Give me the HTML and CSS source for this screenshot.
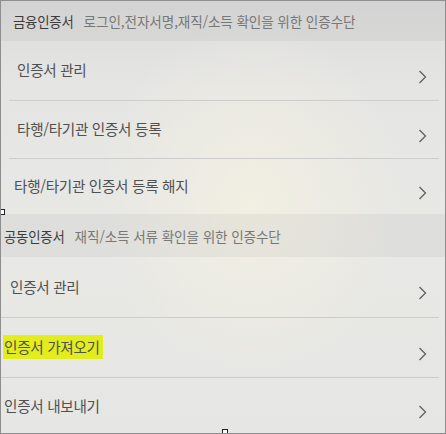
FILE: index.html
```html
<!DOCTYPE html>
<html lang="ko">
<head>
<meta charset="utf-8">
<title>인증서</title>
<link rel="stylesheet" href="styles.css">
</head>
<body>
<div class="frame">
  <section class="group group-fin">
    <div class="group-head">
      <span class="head-title">금융인증서</span>
      <span class="head-sub">로그인,전자서명,재직/소득 확인을 위한 인증수단</span>
    </div>
    <div class="row r1"><span class="label">인증서 관리</span><svg class="chev" viewBox="0 0 9 14"><path d="M1.5 1 L7.5 7 L1.5 13"/></svg></div>
    <div class="row r2"><span class="label">타행/타기관 인증서 등록</span><svg class="chev" viewBox="0 0 9 14"><path d="M1.5 1 L7.5 7 L1.5 13"/></svg></div>
    <div class="row r3 last"><span class="label">타행/타기관 인증서 등록 해지</span><svg class="chev" viewBox="0 0 9 14"><path d="M1.5 1 L7.5 7 L1.5 13"/></svg></div>
  </section>
  <section class="group group-joint">
    <div class="group-head">
      <span class="head-title">공동인증서</span>
      <span class="head-sub">재직/소득 서류 확인을 위한 인증수단</span>
    </div>
    <div class="row r4"><span class="label">인증서 관리</span><svg class="chev" viewBox="0 0 9 14"><path d="M1.5 1 L7.5 7 L1.5 13"/></svg></div>
    <div class="row r5"><span class="label mark">인증서 가져오기</span><svg class="chev" viewBox="0 0 9 14"><path d="M1.5 1 L7.5 7 L1.5 13"/></svg></div>
    <div class="row r6 last"><span class="label">인증서 내보내기</span><svg class="chev" viewBox="0 0 9 14"><path d="M1.5 1 L7.5 7 L1.5 13"/></svg></div>
  </section>
  <span class="handle h-left"></span>
  <span class="handle h-bottom"></span>
</div>
</body>
</html>
```

FILE: styles.css
```css
html, body {
  margin: 0;
  padding: 0;
}
body {
  font-family: "Noto Sans CJK KR", "Noto Sans", sans-serif;
  background: #e4e4e2;
}
.frame {
  position: relative;
  box-sizing: border-box;
  width: 446px;
  height: 434px;
  border: 1px solid #8e8e8e;
  overflow: hidden;
  background:
    radial-gradient(ellipse 220px 260px at 250px 200px, rgba(250, 246, 225, 0.55), rgba(250, 246, 225, 0) 70%),
    linear-gradient(180deg, #dcdcdc 0%, #e5e5e3 20%, #e8e8e5 55%, #e6e6e4 100%);
  display: flex;
  flex-direction: column;
}
.group {
  display: flex;
  flex-direction: column;
}
.group-head {
  display: flex;
  align-items: center;
  background: rgba(0, 0, 0, 0.04);
}
.group-fin .group-head {
  height: 40px;
  padding-left: 12px;
}
.group-joint .group-head {
  height: 43px;
  padding-left: 3px;
}
.head-title {
  font-size: 13.4px;
  letter-spacing: -0.2px;
  color: #3c3c3c;
  margin-right: 10px;
}
.head-sub {
  font-size: 13.6px;
  letter-spacing: -0.1px;
  color: #777;
}
.row {
  display: flex;
  align-items: center;
  justify-content: space-between;
  border-bottom: 1px solid #cdcdcb;
  padding-right: 12px;
  margin-right: 6px;
}
.row.last {
  border-bottom: none;
}
.group-fin .row {
  margin-left: 8px;
  padding-left: 8px;
}
.group-fin .r3 {
  padding-left: 5px;
}
.group-joint .row {
  padding-left: 3px;
}
.group-joint .r4 {
  padding-left: 9px;
}
.r1 { height: 59px; }
.r2 { height: 57px; }
.r3 { height: 55px; }
.r4 { height: 60px; }
.r5 { height: 59px; }
.r6 { height: 56px; }
.label {
  font-size: 14.6px;
  letter-spacing: -0.3px;
  color: #505050;
  margin-top: -2px;
}
.mark {
  background: #e3ec1c;
  padding: 1px 3px 2px 1px;
  margin-left: -1px;
}
.chev {
  width: 9px;
  height: 14px;
  margin-top: 12px;
  flex: none;
}
.chev path {
  fill: none;
  stroke: #606060;
  stroke-width: 1.3;
}
.handle {
  position: absolute;
  width: 4px;
  height: 4px;
  border: 1px solid #222;
  background: #fff;
}
.h-left {
  left: -2px;
  top: 208px;
}
.h-bottom {
  left: 221px;
  top: 428px;
}
```
